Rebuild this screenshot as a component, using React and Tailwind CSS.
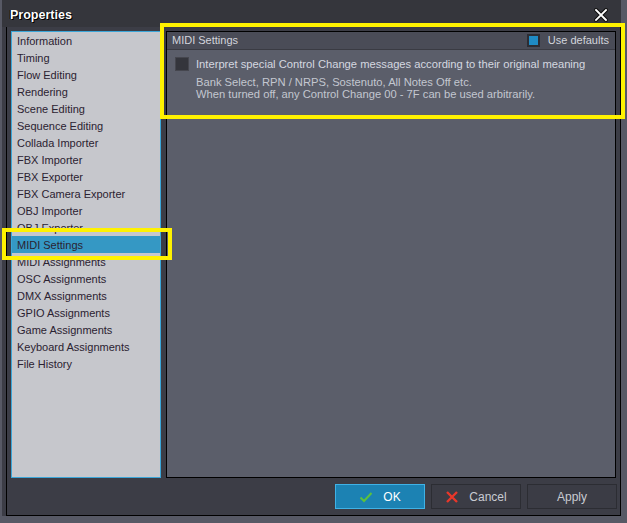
import React from 'react';

const items = [
  'Information',
  'Timing',
  'Flow Editing',
  'Rendering',
  'Scene Editing',
  'Sequence Editing',
  'Collada Importer',
  'FBX Importer',
  'FBX Exporter',
  'FBX Camera Exporter',
  'OBJ Importer',
  'OBJ Exporter',
  'MIDI Settings',
  'MIDI Assignments',
  'OSC Assignments',
  'DMX Assignments',
  'GPIO Assignments',
  'Game Assignments',
  'Keyboard Assignments',
  'File History',
];

const font = { fontFamily: '"Liberation Sans", Arial, sans-serif' };

const CloseIcon = () => (
  <svg width="14" height="14" viewBox="0 0 14 14">
    <path d="M2 2 L12 12 M12 2 L2 12" stroke="#111" strokeWidth="4" strokeLinecap="square" />
    <path d="M2 2 L12 12 M12 2 L2 12" stroke="#fff" strokeWidth="1.8" strokeLinecap="square" />
  </svg>
);

const CheckIcon = () => (
  <svg width="14" height="12" viewBox="0 0 14 12">
    <path d="M1.5 6.5 L5 10 L12.5 2" fill="none" stroke="#5cc23c" strokeWidth="2" />
  </svg>
);

const CrossIcon = () => (
  <svg width="14" height="14" viewBox="0 0 14 14">
    <path d="M2 2 L12 12 M12 2 L2 12" fill="none" stroke="#e8372a" strokeWidth="2.4" />
  </svg>
);

const Button = ({ primary, icon, children }) => (
  <button
    className={`flex h-[25px] w-[90px] items-center justify-center gap-[10px] border text-[12px] ${
      primary
        ? 'border-[#3fb2e6] bg-[#1c82b3] text-white'
        : 'border-[#2c2d33] bg-[#3b3c45] text-[#c9cbd2]'
    }`}
  >
    {icon}
    <span>{children}</span>
  </button>
);

export default function App() {
  return (
    <div className="relative h-[523px] w-[627px] overflow-hidden bg-[#575965]" style={font}>
      <div className="ml-[2px] flex h-[516px] w-[619px] flex-col bg-[#3c3d46]">
        {/* title bar */}
        <div className="flex h-[27px] items-center justify-between bg-[#35363c] pl-[8px] pr-[13px] pt-[3px]">
          <span
            className="text-[12.5px] font-bold text-white"
            style={{ textShadow: '1px 1px 0 #000, -1px 0 0 #000' }}
          >
            Properties
          </span>
          <CloseIcon />
        </div>

        {/* body frame */}
        <div className="ml-[4px] flex flex-1 flex-col border-b border-l border-r border-black pb-[4px] pl-[4px] pr-[3px] pt-[4px]">
          <div className="flex h-[447px] gap-[5px]">
            {/* list */}
            <div className="w-[150px] border border-[#3ba6d8] bg-[#c6c7cc] text-[11px] text-[#2b2231]">
              {items.map((it) => (
                <div
                  key={it}
                  className={`flex h-[17px] items-center pl-[5px] pt-[1px] ${
                    it === 'MIDI Settings' ? 'bg-[#3598c4]' : ''
                  }`}
                >
                  {it}
                </div>
              ))}
            </div>

            {/* panel */}
            <div className="flex w-[450px] flex-col border border-black bg-[#5b5e6a]">
              <div className="flex h-[18px] items-center justify-between border-b border-[#3a3b43] bg-[#4a4c57] pl-[5px] pr-[6px] text-[11px] text-[#d3d5dc]">
                <span>MIDI Settings</span>
                <div className="flex items-center gap-[8px]">
                  <div className="flex h-[13px] w-[13px] items-center justify-center bg-[#2c2d34]">
                    <div className="h-[9px] w-[9px] bg-[#1f8bc4]" />
                  </div>
                  <span>Use defaults</span>
                </div>
              </div>
              <div className="flex gap-[7px] pl-[8px] pt-[7px]">
                <div className="h-[14px] w-[14px] shrink-0 border border-[#45464e] bg-[#34353c]" />
                <div className="pt-[1px] text-[11.2px] leading-[12px]">
                  <div className="text-[#d5d8e0]">
                    Interpret special Control Change messages according to their original meaning
                  </div>
                  <div className="mt-[6px] text-[#c3c7d0]">Bank Select, RPN / NRPS, Sostenuto, All Notes Off etc.</div>
                  <div className="text-[#c3c7d0]">When turned off, any Control Change 00 - 7F can be used arbitrarily.</div>
                </div>
              </div>
            </div>
          </div>

          {/* buttons */}
          <div className="mt-[6px] flex justify-end gap-[6px]">
            <Button primary icon={<CheckIcon />}>OK</Button>
            <Button icon={<CrossIcon />}>Cancel</Button>
            <Button>Apply</Button>
          </div>
        </div>
      </div>

      {/* annotation highlights */}
      <div className="absolute left-[160px] top-[23px] h-[96px] w-[465px] border-[4px] border-[#fff200]" />
      <div className="absolute left-[2px] top-[228px] h-[32px] w-[170px] border-[4px] border-[#fff200]" />
    </div>
  );
}
